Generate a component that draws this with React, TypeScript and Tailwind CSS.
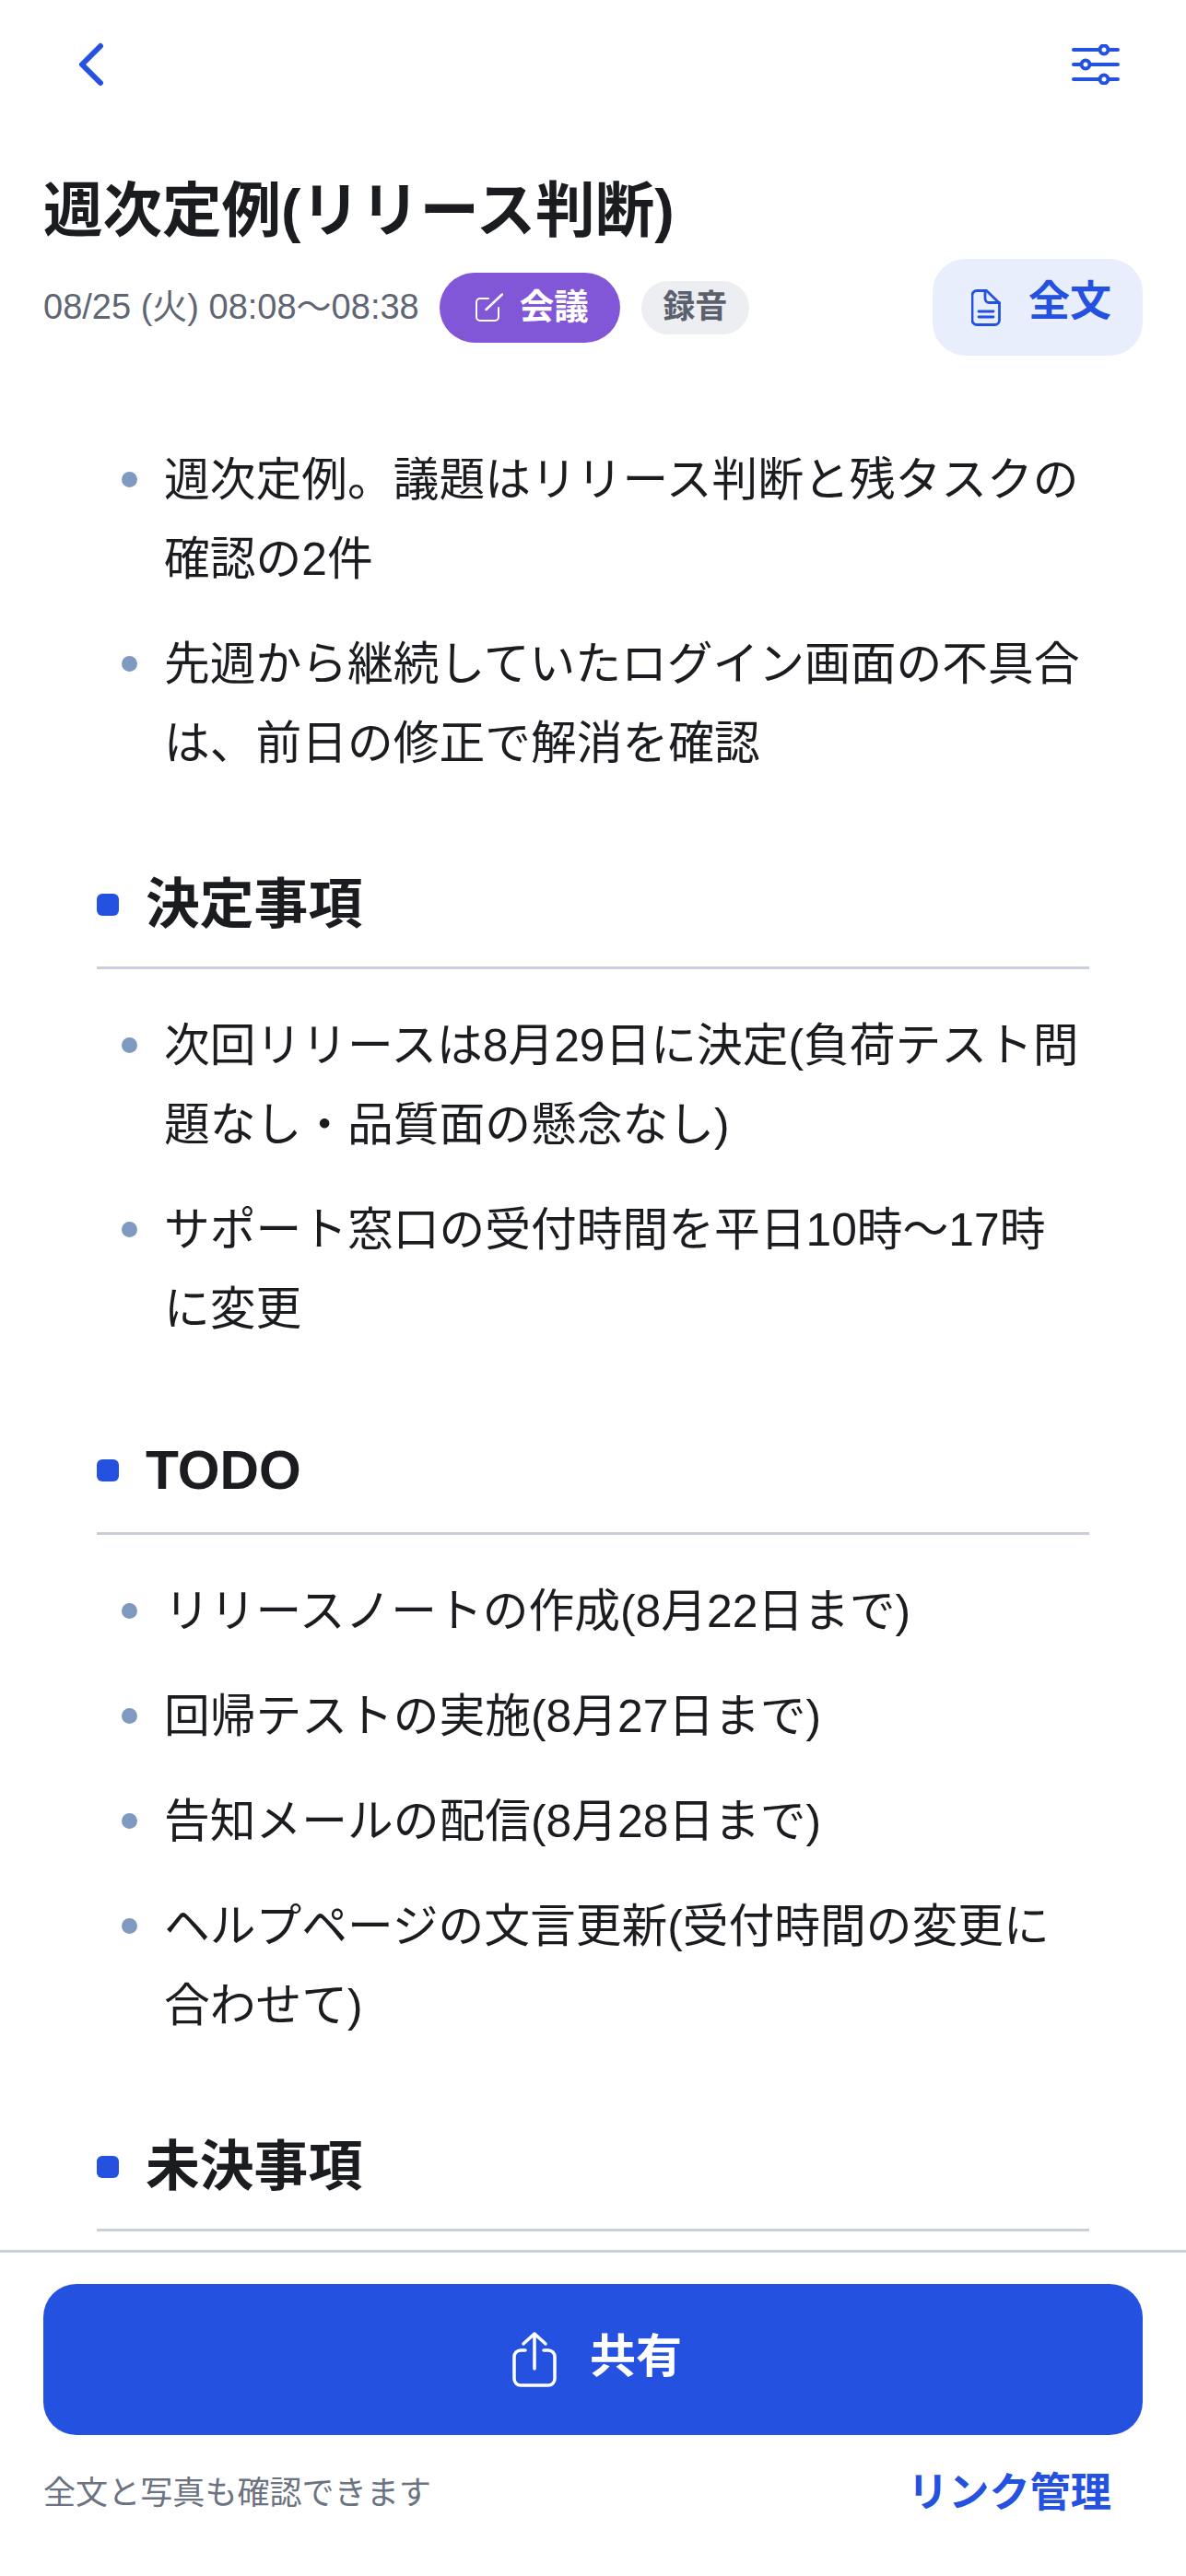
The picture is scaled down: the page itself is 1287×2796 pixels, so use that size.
const font = "font-['Liberation_Sans','Noto_Sans_CJK_JP',sans-serif]";

const intro = [
  "週次定例。議題はリリース判断と残タスクの確認の2件",
  "先週から継続していたログイン画面の不具合は、前日の修正で解消を確認",
];

const sections = [
  {
    title: "決定事項",
    items: [
      "次回リリースは8月29日に決定(負荷テスト問題なし・品質面の懸念なし)",
      "サポート窓口の受付時間を平日10時〜17時に変更",
    ],
  },
  {
    title: "TODO",
    items: [
      "リリースノートの作成(8月22日まで)",
      "回帰テストの実施(8月27日まで)",
      "告知メールの配信(8月28日まで)",
      "ヘルプページの文言更新(受付時間の変更に合わせて)",
    ],
  },
  { title: "未決事項", items: [] as string[] },
];

function BackIcon() {
  return (
    <svg width="28" height="48" viewBox="0 0 28 48" fill="none" stroke="#2451e0" strokeWidth="6" strokeLinecap="round" strokeLinejoin="round">
      <path d="M24 4 4 24l20 20" />
    </svg>
  );
}

function SlidersIcon() {
  return (
    <svg width="52" height="44" viewBox="0 0 52 44" fill="none" stroke="#2451e0" strokeWidth="4">
      <path d="M2 6h48M2 22h48M2 38h48" strokeLinecap="round" />
      <circle cx="35" cy="6" r="4.5" fill="#fff" />
      <circle cx="15" cy="22" r="4.5" fill="#fff" />
      <circle cx="35" cy="38" r="4.5" fill="#fff" />
    </svg>
  );
}

function PenIcon() {
  return (
    <svg width="30" height="31" viewBox="0 0 30 31" fill="none" stroke="#fff" strokeWidth="2" strokeLinecap="round" strokeLinejoin="round">
      <path d="M14 6H5a4 4 0 0 0-4 4v16a4 4 0 0 0 4 4h16a4 4 0 0 0 4-4v-10" />
      <path d="M11.500 18 29 1.500" strokeWidth="2.500" />
    </svg>
  );
}

function DocIcon() {
  return (
    <svg width="32" height="40" viewBox="0 0 32 40" fill="none" stroke="#2451e0" strokeWidth="2.800" strokeLinecap="round" strokeLinejoin="round">
      <path d="M6 1.500h10.500L30.500 15v18.500a5 5 0 0 1-5 5H6a5 5 0 0 1-5-5v-27a5 5 0 0 1 5-5Z" />
      <path d="M15 1.500V10a4.500 4.500 0 0 0 4.500 4.500h11" />
      <path d="M8 24h16M8 30h16" />
    </svg>
  );
}

function ShareIcon() {
  return (
    <svg width="48" height="60" viewBox="0 0 48 60" fill="none" stroke="#fff" strokeWidth="3.500" strokeLinecap="round" strokeLinejoin="round">
      <path d="M14 20H9a7 7 0 0 0-7 7v24a7 7 0 0 0 7 7h30a7 7 0 0 0 7-7V27a7 7 0 0 0-7-7h-5" />
      <path d="M24 40V2M12 13 24 2l12 11" />
    </svg>
  );
}

function Bullets({ items }: { items: string[] }) {
  return (
    <ul className="flex flex-col gap-7 pl-[27px]">
      {items.map((item) => (
        <li key={item} className="flex text-[49.75px] leading-[86px] text-[#1a1c20]">
          <span className="mt-[34px] mr-[29px] h-[17px] w-[17px] shrink-0 rounded-full bg-[#7f99c0]" />
          <span>{item}</span>
        </li>
      ))}
    </ul>
  );
}

export default function App() {
  return (
    <div className={`flex h-[2796px] w-[1287px] flex-col overflow-hidden bg-white ${font}`}>
      <header className="flex h-[140px] shrink-0 items-center justify-between pl-[85px] pr-[72px]">
        <BackIcon />
        <SlidersIcon />
      </header>

      <div className="px-[47px] pt-[44px]">
        <h1 className="text-[64.5px] leading-[90px] font-bold text-[#1a1c20]">週次定例(リリース判断)</h1>
        <div className="mt-[7px] flex items-center">
          <span className="text-[38px] text-[#5f6673]">08/25 (火) 08:08〜08:38</span>
          <span className="ml-[22px] flex h-[76px] w-[196px] items-center justify-center gap-[18px] rounded-full bg-[#8157d8] pl-[5px] text-[37.5px] font-bold text-white">
            <PenIcon />
            会議
          </span>
          <span className="ml-[23px] flex h-[58px] w-[117px] items-center justify-center rounded-full bg-[#eceef2] text-[35px] font-bold text-[#5a606c]">
            録音
          </span>
          <button className="ml-auto flex h-[105px] w-[228px] items-center justify-center gap-[30px] rounded-[36px] bg-[#e8eefb] pl-[8px] text-[45px] font-bold text-[#2451e0]">
            <DocIcon />
            <span className="-mt-[12px]">全文</span>
          </button>
        </div>
      </div>

      <main className="min-h-0 flex-1 overflow-hidden pt-[92px] pl-[105px] pr-[105px]">
        <Bullets items={intro} />
        {sections.map((section) => (
          <section key={section.title} className="mt-[84px]">
            <div className="flex h-[118px] items-center border-b-[3px] border-[#c9cedb] pb-[19px]">
              <span className="mr-[29px] h-[24px] w-[24px] rounded-[6px] bg-[#2451e0]" />
              <h2 className="text-[58.8px] font-bold text-[#1a1c20]">{section.title}</h2>
            </div>
            {section.items.length > 0 && (
              <div className="pt-[40px]">
                <Bullets items={section.items} />
              </div>
            )}
          </section>
        ))}
      </main>

      <footer className="h-[354px] shrink-0 border-t-[3px] border-[#c9cedb] bg-white px-[47px] pt-[34px]">
        <button className="flex h-[164px] w-full items-center justify-center gap-[36px] rounded-[36px] bg-[#2451e0] pl-[9px] text-[50px] font-bold text-white">
          <ShareIcon />
          <span className="-mt-[6px]">共有</span>
        </button>
        <div className="mt-[30px] flex items-center justify-between pr-[34px]">
          <span className="text-[35.1px] text-[#6b7280]">全文と写真も確認できます</span>
          <span className="text-[44.2px] font-bold text-[#2451e0]">リンク管理</span>
        </div>
      </footer>
    </div>
  );
}
